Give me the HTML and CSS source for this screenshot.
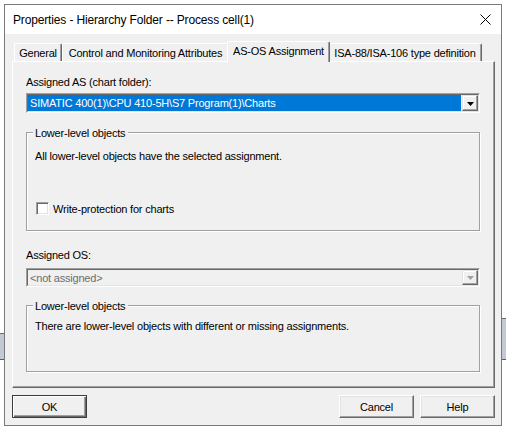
FILE: index.html
```html
<!DOCTYPE html>
<html>
<head>
<meta charset="utf-8">
<link rel="stylesheet" href="styles.css">
</head>
<body>
<div class="desk desk-left"></div>
<div class="desk desk-right"></div>
<div class="window">
  <div class="titlebar">
    <span class="title">Properties - Hierarchy Folder -- Process cell(1)</span>
    <svg class="close" width="11" height="11" viewBox="0 0 11 11"><path d="M0.5 0.5 L10.5 10.5 M10.5 0.5 L0.5 10.5" stroke="#000" stroke-width="1" fill="none"/></svg>
  </div>
  <div class="body">
    <div class="tabs">
      <div class="tab t-general">General</div>
      <div class="tab t-control">Control and Monitoring Attributes</div>
      <div class="tab t-asos active">AS-OS Assignment</div>
      <div class="tab t-isa">ISA-88/ISA-106 type definition</div>
    </div>
    <div class="panel">
      <div class="label l-as">Assigned AS (chart folder):</div>
      <div class="combo c-as">
        <div class="combo-inner">
          <div class="combo-field selected">SIMATIC 400(1)\CPU 410-5H\S7 Program(1)\Charts</div>
          <div class="combo-btn"><svg width="7" height="4" viewBox="0 0 7 4"><polygon points="0,0 7,0 3.5,4" fill="#000"/></svg></div>
        </div>
      </div>
      <div class="group g1">
        <span class="legend">Lower-level objects</span>
        <div class="gtext t1">All lower-level objects have the selected assignment.</div>
        <div class="check-row">
          <span class="checkbox"></span>
          <span class="check-label">Write-protection for charts</span>
        </div>
      </div>
      <div class="label l-os">Assigned OS:</div>
      <div class="combo c-os disabled">
        <div class="combo-inner">
          <div class="combo-field">&lt;not assigned&gt;</div>
          <div class="combo-btn"><svg width="7" height="4" viewBox="0 0 7 4"><polygon points="0,0 7,0 3.5,4" fill="#a0a0a0"/></svg></div>
        </div>
      </div>
      <div class="group g2">
        <span class="legend">Lower-level objects</span>
        <div class="gtext t2">There are lower-level objects with different or missing assignments.</div>
      </div>
    </div>
    <div class="buttons">
      <div class="btn default">OK</div>
      <div class="btn-group">
        <div class="btn">Cancel</div>
        <div class="btn">Help</div>
      </div>
    </div>
  </div>
</div>
</body>
</html>
```

FILE: styles.css
```css
html, body {
  margin: 0;
  padding: 0;
  background: #ffffff;
}
body {
  font-family: "Liberation Sans", Arial, sans-serif;
  font-size: 11px;
  letter-spacing: -0.2px;
  color: #000;
  position: relative;
}
.desk {
  position: absolute;
  width: 4px;
  box-sizing: border-box;
  background: #c3c9d2;
  border-top: 1px solid #6a6e75;
  border-bottom: 1px solid #5a5e64;
}
.desk-left {
  left: 0;
  top: 333px;
  height: 27px;
}
.desk-right {
  right: 0;
  top: 318px;
  height: 42px;
}
.window {
  position: relative;
  margin: 4px 0 0 4px;
  width: 496px;
  height: 420px;
  border: 1px solid #7a7a7a;
  display: flex;
  flex-direction: column;
}
.titlebar {
  height: 29px;
  flex: none;
  background: #fff;
  display: flex;
  align-items: center;
  padding: 0 10px 0 8px;
  font-size: 12px;
  letter-spacing: -0.15px;
}
.title {
  flex: 1;
}
.close {
  display: block;
  margin-top: -1px;
}
.body {
  flex: 1;
  background: #f0f0f0;
  padding: 7px 6px 7px 7px;
  display: flex;
  flex-direction: column;
}
.tabs {
  display: flex;
  height: 20px;
  padding-left: 2px;
  align-items: flex-end;
  position: relative;
  z-index: 1;
}
.tab {
  height: 18px;
  box-sizing: border-box;
  border: 1px solid;
  border-color: #fff #696969 transparent #fff;
  border-bottom: none;
  box-shadow: inset -1px 0 #a0a0a0;
  border-radius: 2px 2px 0 0;
  display: flex;
  align-items: center;
  justify-content: center;
  white-space: nowrap;
  background: #f0f0f0;
  padding-top: 1px;
}
.t-general { width: 48px; }
.t-control { width: 167px; }
.t-asos { width: 99px; }
.t-isa { width: 154px; }
.tab.active {
  width: 103px;
  height: 21px;
  margin: 0 -2px -1px -2px;
  padding-top: 0;
  padding-bottom: 3px;
  position: relative;
  z-index: 2;
}
.panel {
  height: 327px;
  box-sizing: border-box;
  border: 1px solid;
  border-color: #fff #696969 #696969 #fff;
  box-shadow: inset -1px -1px #a0a0a0;
  padding: 13px 14px 0 13px;
}
.label {
  line-height: 13px;
  height: 13px;
  white-space: nowrap;
}
.l-as { margin-bottom: 4px; padding-top: 1px; }
.l-os { margin-top: 18px; margin-bottom: 6px; }
.combo {
  box-sizing: border-box;
  border: 1px solid;
  border-color: #a0a0a0 #fff #fff #a0a0a0;
  display: flex;
}
.c-as { height: 20px; }
.c-os { height: 19px; }
.combo-inner {
  flex: 1;
  border: 1px solid;
  border-color: #696969 #e3e3e3 #e3e3e3 #696969;
  display: flex;
}
.combo-field {
  flex: 1;
  padding-left: 2px;
  line-height: 16px;
  white-space: nowrap;
  overflow: hidden;
  margin-right: 1px;
}
.combo-field.selected {
  background: #0078d7;
  color: #fff;
}
.disabled .combo-field {
  color: #6d6d6d;
  line-height: 16px;
}
.combo-btn {
  width: 16px;
  box-sizing: border-box;
  border: 1px solid;
  border-color: #e3e3e3 #696969 #696969 #e3e3e3;
  box-shadow: inset -1px -1px #a0a0a0, inset 1px 1px #fff;
  display: flex;
  align-items: center;
  justify-content: center;
  background: #f0f0f0;
}
.combo-btn svg {
  display: block;
  margin-top: 1px;
}
.group {
  position: relative;
  box-sizing: border-box;
  border: 1px solid #a0a0a0;
  box-shadow: inset 1px 1px #fff, 1px 1px #fff;
}
.g1 {
  margin-top: 19px;
  height: 99px;
}
.g2 {
  margin-top: 18px;
  height: 67px;
}
.legend {
  position: absolute;
  top: -6px;
  left: 6px;
  padding: 0 3px 0 2px;
  background: #f0f0f0;
  line-height: 13px;
  white-space: nowrap;
}
.gtext {
  padding-left: 8px;
  line-height: 13px;
  white-space: nowrap;
}
.t1 { margin-top: 17px; }
.t2 { margin-top: 14px; }
.check-row {
  display: flex;
  align-items: flex-start;
  height: 14px;
  margin-top: 39px;
  padding-left: 9px;
}
.checkbox {
  width: 13px;
  height: 13px;
  box-sizing: border-box;
  border: 1px solid;
  border-color: #a0a0a0 #fff #fff #a0a0a0;
  box-shadow: inset 1px 1px #696969, inset -1px -1px #e3e3e3;
  background: #fff;
}
.check-label {
  margin-left: 4px;
  line-height: 13px;
  padding-top: 1px;
}
.buttons {
  margin-top: 7px;
  display: flex;
  justify-content: space-between;
}
.btn-group {
  display: flex;
  gap: 6px;
}
.btn {
  width: 75px;
  height: 23px;
  box-sizing: border-box;
  border: 1px solid;
  border-color: #fff #696969 #696969 #fff;
  box-shadow: inset -1px -1px #a0a0a0, inset 1px 1px #e3e3e3;
  display: flex;
  align-items: center;
  justify-content: center;
}
.btn.default {
  border: 1px solid #3c3c3c;
  box-shadow: inset 1px 1px #fff, inset -1px -1px #696969, inset -2px -2px #a0a0a0;
}
```
